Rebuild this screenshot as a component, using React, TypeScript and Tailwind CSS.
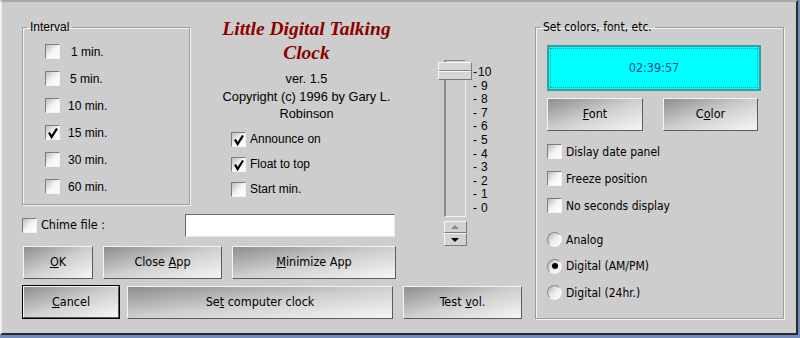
import React from 'react';

const sans = "font-['Liberation_Sans',Arial,sans-serif]";
const cond = "font-['DejaVu_Sans_Condensed','DejaVu_Sans',sans-serif]";

function Check({ checked }: { checked?: boolean }) {
  return (
    <span className="relative inline-block h-[15px] w-[15px] shrink-0 border-t border-l border-t-[#7c7c7c] border-l-[#7c7c7c] border-r border-b border-r-[#f2f2f2] border-b-[#f2f2f2] bg-linear-to-br from-[#bdbdbd] via-[#f4f4f4] to-white">
      {checked && (
        <svg viewBox="0 0 14 14" className="absolute left-0 top-0 h-[14px] w-[14px]">
          <path d="M3 6.5 L5.6 11 L11 2.5" fill="none" stroke="#000" strokeWidth="2.3" />
        </svg>
      )}
    </span>
  );
}

function Radio({ checked }: { checked?: boolean }) {
  return (
    <span className="relative inline-flex h-[15px] w-[15px] shrink-0 items-center justify-center rounded-full border border-t-[#8a8a8a] border-l-[#8a8a8a] border-r-[#f2f2f2] border-b-[#f2f2f2] bg-linear-to-br from-[#b4b4b4] via-[#ededed] to-white">
      {checked && <span className="h-[6px] w-[6px] rounded-full bg-black" />}
    </span>
  );
}

function Btn({ children, w, def }: { children: React.ReactNode; w: string; def?: boolean }) {
  return (
    <div className={`${w} ${def ? 'border border-black' : ''} h-full`}>
      <div className={`flex h-full w-full items-center justify-center border border-t-[#f4f4f4] border-l-[#f4f4f4] border-r-[#5c5c5c] border-b-[#5c5c5c] bg-linear-to-br from-[#8e8e8e] via-[#cfcfcf] to-[#f6f6f6] text-[12.5px] text-black ${cond}`}>
        {children}
      </div>
    </div>
  );
}

function Group({ label, className, children }: { label: string; className: string; children: React.ReactNode }) {
  return (
    <fieldset className={`border border-[#9c9c9c] shadow-[1px_1px_0_#f4f4f4,inset_1px_1px_0_#f4f4f4] ${className}`}>
      <legend className="ml-[4px] px-[3px] text-[12px] leading-[14px] text-black">{label}</legend>
      {children}
    </fieldset>
  );
}

export default function App() {
  const intervals = [
    { t: '1 min.', c: false, pad: 'pl-[3px]' },
    { t: '5 min.', c: false, pad: 'pl-[2px]' },
    { t: '10 min.', c: false, pad: '' },
    { t: '15 min.', c: true, pad: '' },
    { t: '30 min.', c: false, pad: '' },
    { t: '60 min.', c: false, pad: '' },
  ];
  const ticks = ['10', '9', '8', '7', '6', '5', '4', '3', '2', '1', '0'];

  return (
    <div className="h-[338px] w-[800px] overflow-hidden bg-[#6f8cbd]">
      <div className="flex h-[335px] w-[798px] border-t-2 border-l-2 border-t-[#a8a8a8] border-l-[#efefef] border-r-2 border-b-2 border-r-[#2a2a2a] border-b-[#2a2a2a] bg-[#cdcdcd]">
        {/* left side */}
        <div className="flex w-[533px] flex-col pl-[20px] pt-[16px]">
          <div className="flex h-[189px]">
            <Group label="Interval" className={`mt-[2px] h-[185px] w-[168px] ${sans}`}>
              <div className="flex flex-col gap-[12px] pl-[22px] pt-[10px]">
                {intervals.map((i) => (
                  <div key={i.t} className="flex h-[15px] items-center gap-[8px] text-[12px] text-black">
                    <Check checked={i.c} />
                    <span className={i.pad}>{i.t}</span>
                  </div>
                ))}
              </div>
            </Group>

            {/* title block */}
            <div className={`-mt-[1px] flex w-[233px] flex-col items-center ${sans}`}>
              <div className="text-center font-['Liberation_Serif','Times_New_Roman',serif] text-[19.5px] font-bold italic leading-[24px] text-[#8b0000]">
                Little Digital Talking
                <br />
                Clock
              </div>
              <div className="mt-[5px] text-center text-[12.8px] leading-[17.5px] text-black">
                ver. 1.5
                <br />
                Copyright (c) 1996 by Gary L.
                <br />
                Robinson
              </div>
              <div className="mt-[9px] flex w-full flex-col gap-[10px] pl-[41px]">
                {[
                  ['Announce on', true],
                  ['Float to top', true],
                  ['Start min.', false],
                ].map(([t, c]) => (
                  <div key={t as string} className="flex h-[15px] items-center gap-[4px] text-[12px] text-black">
                    <Check checked={c as boolean} />
                    <span>{t as string}</span>
                  </div>
                ))}
              </div>
            </div>

            {/* slider */}
            <div className={`flex ${sans}`}>
              <div className="relative ml-[15px] mt-[42px] flex w-[34px] shrink-0 flex-col items-center">
                <div className="h-[157px] w-[22px] shrink-0 border border-t-[#8a8a8a] border-l-[#8a8a8a] border-l-2 border-r-[#f2f2f2] border-b-[#f2f2f2] bg-[#cdcdcd]" />
                <div className="absolute left-0 top-[2px] h-[18px] w-[34px] border border-t-[#f6f6f6] border-l-[#f6f6f6] border-r-[#7a7a7a] border-b-[#7a7a7a] bg-[#d6d6d6]">
                  <div className="mt-[7px] h-[1px] w-full bg-[#8a8a8a]" />
                  <div className="h-[1px] w-full bg-[#f6f6f6]" />
                </div>
                <div className="mt-[4px] flex h-[12px] w-[23px] shrink-0 items-center justify-center border border-t-[#f4f4f4] border-l-[#f4f4f4] border-r-[#7a7a7a] border-b-[#7a7a7a] bg-[#d2d2d2]">
                  <svg viewBox="0 0 8 4" className="h-[4px] w-[8px]"><path d="M0 4 L4 0 L8 4 Z" fill="#8a8a8a" /></svg>
                </div>
                <div className="flex h-[13px] w-[23px] shrink-0 items-center justify-center border border-t-[#f4f4f4] border-l-[#f4f4f4] border-r-[#7a7a7a] border-b-[#7a7a7a] bg-[#d2d2d2]">
                  <svg viewBox="0 0 8 4" className="h-[4px] w-[8px]"><path d="M0 0 L8 0 L4 4 Z" fill="#000" /></svg>
                </div>
              </div>
              <div className="ml-[1px] mt-[48px] flex flex-col text-[12px] leading-[13.6px] text-black">
                {ticks.map((t) => (
                  <div key={t} className="flex h-[13.6px] shrink-0 items-center">
                    <span className={t === '10' ? 'mr-[1px]' : 'mr-[4px]'}>-</span>
                    <span>{t}</span>
                  </div>
                ))}
              </div>
            </div>
          </div>

          {/* chime row */}
          <div className="mt-[7px] flex h-[23px] items-center">
            <div className="flex items-center gap-[4px]">
              <Check />
              <span className={`text-[12.5px] text-black ${cond}`}>Chime file :</span>
            </div>
            <div className="ml-[80px] h-[23px] w-[210px] border border-t-[#6a6a6a] border-l-[#6a6a6a] border-r-[#e8e8e8] border-b-[#e8e8e8] bg-white" />
          </div>

          {/* button row 1 */}
          <div className="mt-[9px] flex h-[33px] gap-[10px] pl-[1px]">
            <Btn w="w-[70px]"><span><u>O</u>K</span></Btn>
            <Btn w="w-[119px]"><span>Close <u>A</u>pp</span></Btn>
            <Btn w="w-[164px]"><span><u>M</u>inimize App</span></Btn>
          </div>

          {/* button row 2 */}
          <div className="mt-[6px] flex h-[34px] items-center">
            <Btn w="w-[98px]" def><span><u>C</u>ancel</span></Btn>
            <div className="ml-[7px] h-[33px]"><Btn w="w-[266px]"><span>Se<u>t</u> computer clock</span></Btn></div>
            <div className="ml-[10px] h-[33px]"><Btn w="w-[119px]"><span>Test <u>v</u>ol.</span></Btn></div>
          </div>
        </div>

        {/* right group */}
        <div className="pt-[18px]">
          <Group label="Set colors, font, etc." className={`h-[299px] w-[249px] ${cond}`}>
            <div className="flex flex-col pl-[11px] pt-[11px]">
              <div className="flex h-[46px] w-[214px] items-center justify-center border-2 border-[#3f9a9a] bg-[#00ffff] outline-1 -outline-offset-4 outline-dotted outline-[#2aa0a0]">
                <span className="text-[12.5px] text-[#1a3c9c]">02:39:57</span>
              </div>
              <div className="mt-[7px] flex h-[33px] gap-[20px]">
                <Btn w="w-[96px]"><span><u>F</u>ont</span></Btn>
                <Btn w="w-[95px]"><span>C<u>o</u>lor</span></Btn>
              </div>
              <div className="mt-[13px] flex flex-col gap-[12px]">
                {['Dislay date panel', 'Freeze position', 'No seconds display'].map((t) => (
                  <div key={t} className="flex h-[15px] items-center gap-[4px] text-[12px] text-black">
                    <Check />
                    <span>{t}</span>
                  </div>
                ))}
              </div>
              <div className="mt-[19px] flex flex-col gap-[11.5px]">
                {[
                  ['Analog', false],
                  ['Digital (AM/PM)', true],
                  ['Digital (24hr.)', false],
                ].map(([t, c]) => (
                  <div key={t as string} className="flex h-[15px] items-center gap-[4px] text-[12px] text-black">
                    <Radio checked={c as boolean} />
                    <span>{t as string}</span>
                  </div>
                ))}
              </div>
            </div>
          </Group>
        </div>
      </div>
    </div>
  );
}
